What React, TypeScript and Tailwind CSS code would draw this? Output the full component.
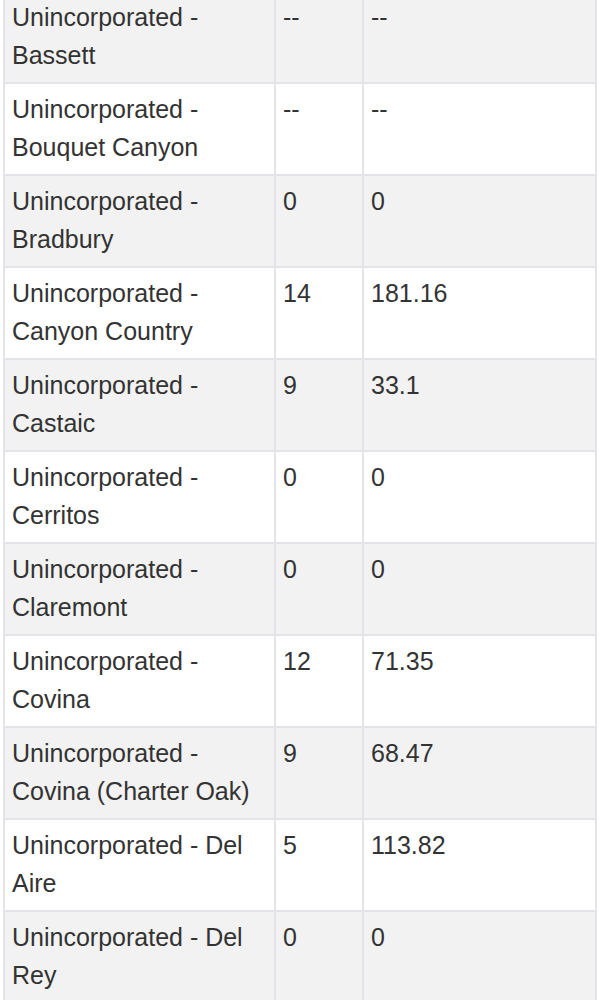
import React from "react";

type Row = { area: string; count: string; rate: string };

const rows: Row[] = [
  { area: "Unincorporated - Bassett", count: "--", rate: "--" },
  { area: "Unincorporated - Bouquet Canyon", count: "--", rate: "--" },
  { area: "Unincorporated - Bradbury", count: "0", rate: "0" },
  { area: "Unincorporated - Canyon Country", count: "14", rate: "181.16" },
  { area: "Unincorporated - Castaic", count: "9", rate: "33.1" },
  { area: "Unincorporated - Cerritos", count: "0", rate: "0" },
  { area: "Unincorporated - Claremont", count: "0", rate: "0" },
  { area: "Unincorporated - Covina", count: "12", rate: "71.35" },
  { area: "Unincorporated - Covina (Charter Oak)", count: "9", rate: "68.47" },
  { area: "Unincorporated - Del Aire", count: "5", rate: "113.82" },
  { area: "Unincorporated - Del Rey", count: "0", rate: "0" },
];

export default function App() {
  return (
    <div className="h-[1000px] w-[600px] overflow-hidden bg-white">
      <table
        className="ml-[3px] mt-[-10px] w-[592px] table-fixed border-collapse text-[25px] leading-[38px] text-[#333333]"
        style={{ fontFamily: '"Liberation Sans", Arial, sans-serif' }}
      >
        <colgroup>
          <col className="w-[271px]" />
          <col className="w-[88px]" />
          <col className="w-[233px]" />
        </colgroup>
        <tbody>
          {rows.map((r, i) => (
            <tr key={r.area} className={i % 2 === 0 ? "bg-[#f2f2f2]" : "bg-white"}>
              <td className="h-[91px] border-2 border-[#e2e4e7] pb-[8px] pl-[7px] pr-[10px] pt-[6px] align-top">
                {r.area}
              </td>
              <td className="border-2 border-[#e2e4e7] pb-[8px] pl-[7px] pr-[6px] pt-[6px] align-top">
                {r.count}
              </td>
              <td className="border-2 border-[#e2e4e7] pb-[8px] pl-[7px] pr-[6px] pt-[6px] align-top">
                {r.rate}
              </td>
            </tr>
          ))}
        </tbody>
      </table>
    </div>
  );
}
